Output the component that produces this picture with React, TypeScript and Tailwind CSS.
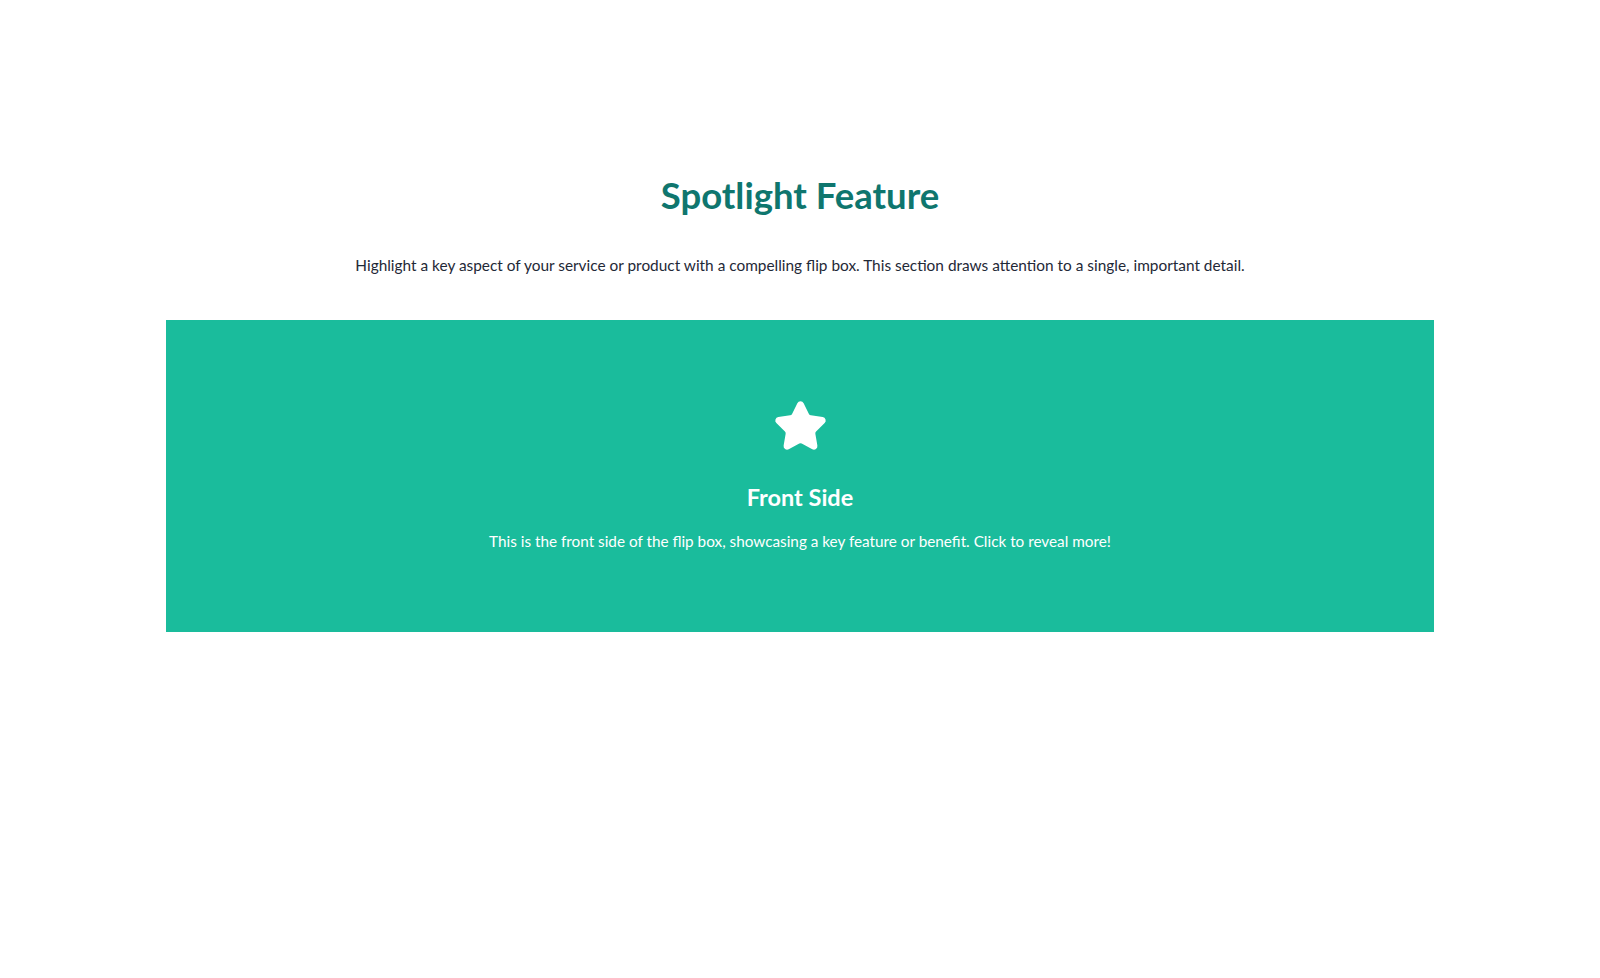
import { Star } from 'lucide-react'

export default function App() {
  return (
    <div className="min-h-[978px] bg-white font-['Lato',sans-serif]">
      <div className="px-[166px] pt-[171px]">
        <h2 className="text-center text-[36.5px] font-bold leading-[48px] text-[#0f766e]">
          Spotlight Feature
        </h2>
        <p className="mt-[34px] text-center text-[15.4px] leading-[24px] text-[#1f2937]">
          Highlight a key aspect of your service or product with a compelling flip box. This section draws attention to a single, important detail.
        </p>
        <div className="mt-[43px] flex h-[312px] flex-col items-center bg-[#1abc9c] pt-[79px] text-white">
          <Star size={55} strokeWidth={2} fill="white" stroke="white" strokeLinejoin="round" />
          <h3 className="mt-[27px] text-[23.5px] font-bold leading-[32px]">Front Side</h3>
          <p className="mt-[16px] text-[15.3px] leading-[24px]">
            This is the front side of the flip box, showcasing a key feature or benefit. Click to reveal more!
          </p>
        </div>
      </div>
    </div>
  )
}
